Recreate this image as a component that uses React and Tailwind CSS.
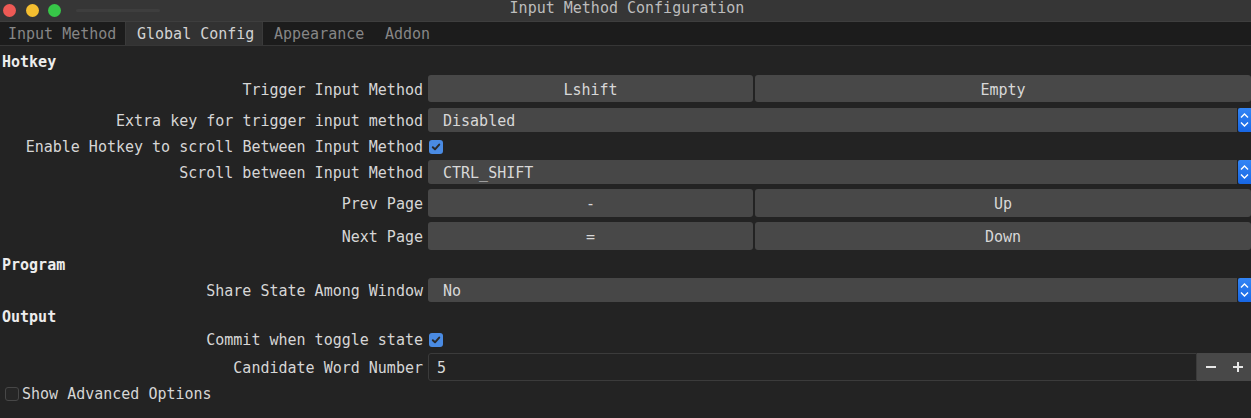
import React from "react";

const font = { fontFamily: '"DejaVu Sans Mono", "Liberation Mono", monospace' };

function Check() {
  return (
    <div className="w-[14px] h-[14px] rounded-[3px] bg-[#4a8be3] flex items-center justify-center">
      <svg width="10" height="10" viewBox="0 0 10 10">
        <path d="M1.8 5.2 L4 7.3 L8.2 2.6" fill="none" stroke="#2a2a2a" strokeWidth="2" strokeLinecap="round" strokeLinejoin="round" />
      </svg>
    </div>
  );
}

function Stepper() {
  return (
    <div className="w-[13px] h-full rounded-l-[2px] bg-linear-to-b from-[#3385f5] to-[#1766e4] flex items-center justify-center">
      <svg width="13" height="24" viewBox="0 0 13 24">
        <path d="M3 9.5 L6.5 6 L10 9.5" fill="none" stroke="#ffffff" strokeWidth="1.4" />
        <path d="M3 14.5 L6.5 18 L10 14.5" fill="none" stroke="#ffffff" strokeWidth="1.4" />
      </svg>
    </div>
  );
}

function Row({ label, children, className = "", shift = true }) {
  return (
    <div className={"grid grid-cols-[423px_1fr] gap-x-[5px] " + className}>
      <div className={"flex items-center justify-end text-[#d6d6d6] whitespace-nowrap " + (shift ? "pt-[2px]" : "")}>{label}</div>
      <div className="flex items-center h-full min-w-0">{children}</div>
    </div>
  );
}

function Btn({ children, className = "" }) {
  return (
    <div className={"h-full rounded-[3px] bg-[#484848] flex items-center justify-center pt-[2px] text-[#d8d8d8] " + className}>
      {children}
    </div>
  );
}

function Combo({ value }) {
  return (
    <div className="flex h-full w-full gap-px">
      <div className="flex-1 h-full rounded-l-[3px] bg-[#474747] flex items-center pl-[15px] pt-[2px] text-[#d8d8d8]">{value}</div>
      <Stepper />
    </div>
  );
}

function Heading({ children, className = "" }) {
  return <div className={"h-[18px] flex items-center pl-[2px] pt-[2px] font-bold text-[#ededed] " + className}>{children}</div>;
}

export default function App() {
  return (
    <div className="w-[1251px] h-[418px] bg-[#232323] text-[15px] leading-[18px] overflow-hidden" style={font}>
      {/* Title bar */}
      <div className="h-[22px] bg-[#363636] border-b border-[#3e3e3e] grid grid-cols-[1fr_auto_1fr] items-center">
        <div className="flex items-center pl-[3px] gap-[9.5px]">
          <div className="w-[13px] h-[13px] rounded-full bg-[#ee5a55]" />
          <div className="w-[13px] h-[13px] rounded-full bg-[#f5bf30]" />
          <div className="w-[13px] h-[13px] rounded-full bg-[#37c748]" />
          <div className="ml-[5px] w-[84px] h-[3px] rounded bg-[#3e3e3e]" />
        </div>
        <div className="text-[#bdbdbd] pl-[3px] -mt-[5px]">Input Method Configuration</div>
        <div />
      </div>
      {/* Tab bar */}
      <div className="h-[24px] bg-[#1c1c1c] border-b border-[#363636] flex items-stretch">
        <div className="w-[125px] flex items-center pl-[8px] pt-[1px] text-[#868686]">Input Method</div>
        <div className="w-[138px] flex items-center pl-[11px] pt-[1px] bg-[#323232] border-x border-[#3a3a3a] text-[#d2d2d2]">Global Config</div>
        <div className="w-[111px] flex items-center pl-[11px] pt-[1px] text-[#868686]">Appearance</div>
        <div className="flex items-center pl-[11px] pt-[1px] text-[#868686]">Addon</div>
      </div>
      {/* Content */}
      <div className="flex flex-col">
        <Heading className="mt-[6px]">Hotkey</Heading>
        <Row label="Trigger Input Method" className="mt-[5px] h-[27px]">
          <div className="flex w-full h-full gap-[2px]">
            <Btn className="w-[325px]">Lshift</Btn>
            <Btn className="flex-1">Empty</Btn>
          </div>
        </Row>
        <Row label="Extra key for trigger input method" className="mt-[6px] h-[24px]">
          <Combo value="Disabled" />
        </Row>
        <Row label="Enable Hotkey to scroll Between Input Method" className="mt-[6px] h-[16px]" shift={false}>
          <div className="pl-px"><Check /></div>
        </Row>
        <Row label="Scroll between Input Method" className="mt-[6px] h-[24px]">
          <Combo value="CTRL_SHIFT" />
        </Row>
        <Row label="Prev Page" className="mt-[5px] h-[28px]">
          <div className="flex w-full h-full gap-[2px]">
            <Btn className="w-[325px]">-</Btn>
            <Btn className="flex-1">Up</Btn>
          </div>
        </Row>
        <Row label="Next Page" className="mt-[5px] h-[28px]">
          <div className="flex w-full h-full gap-[2px]">
            <Btn className="w-[325px]">=</Btn>
            <Btn className="flex-1">Down</Btn>
          </div>
        </Row>
        <Heading className="mt-[5px]">Program</Heading>
        <Row label="Share State Among Window" className="mt-[5px] h-[24px]">
          <Combo value="No" />
        </Row>
        <Heading className="mt-[5px]">Output</Heading>
        <Row label="Commit when toggle state" className="mt-[6px] h-[16px]" shift={false}>
          <div className="pl-px"><Check /></div>
        </Row>
        <Row label="Candidate Word Number" className="mt-[6px] h-[28px]">
          <div className="flex w-full h-full">
            <div className="flex-1 h-full rounded-l-[3px] border border-[#3b3b3b] bg-[#232323] flex items-center pl-[8px] pt-[2px] text-[#d8d8d8]">5</div>
            <div className="w-[54px] h-full bg-[#484848] flex">
              <div className="w-[27px] flex items-center justify-center">
                <svg width="12" height="12" viewBox="0 0 12 12">
                  <path d="M1 6 H11" stroke="#e6e6e6" strokeWidth="2" />
                </svg>
              </div>
              <div className="w-[27px] flex items-center justify-center">
                <svg width="12" height="12" viewBox="0 0 12 12">
                  <path d="M1 6 H11 M6 1 V11" stroke="#e6e6e6" strokeWidth="2" />
                </svg>
              </div>
            </div>
          </div>
        </Row>
        <div className="mt-[5px] h-[16px] flex items-center pl-[5px] gap-[3px]">
          <div className="w-[14px] h-[14px] rounded-[3px] border border-[#474747] bg-[#262626]" />
          <span className="text-[#d6d6d6]">Show Advanced Options</span>
        </div>
      </div>
    </div>
  );
}
